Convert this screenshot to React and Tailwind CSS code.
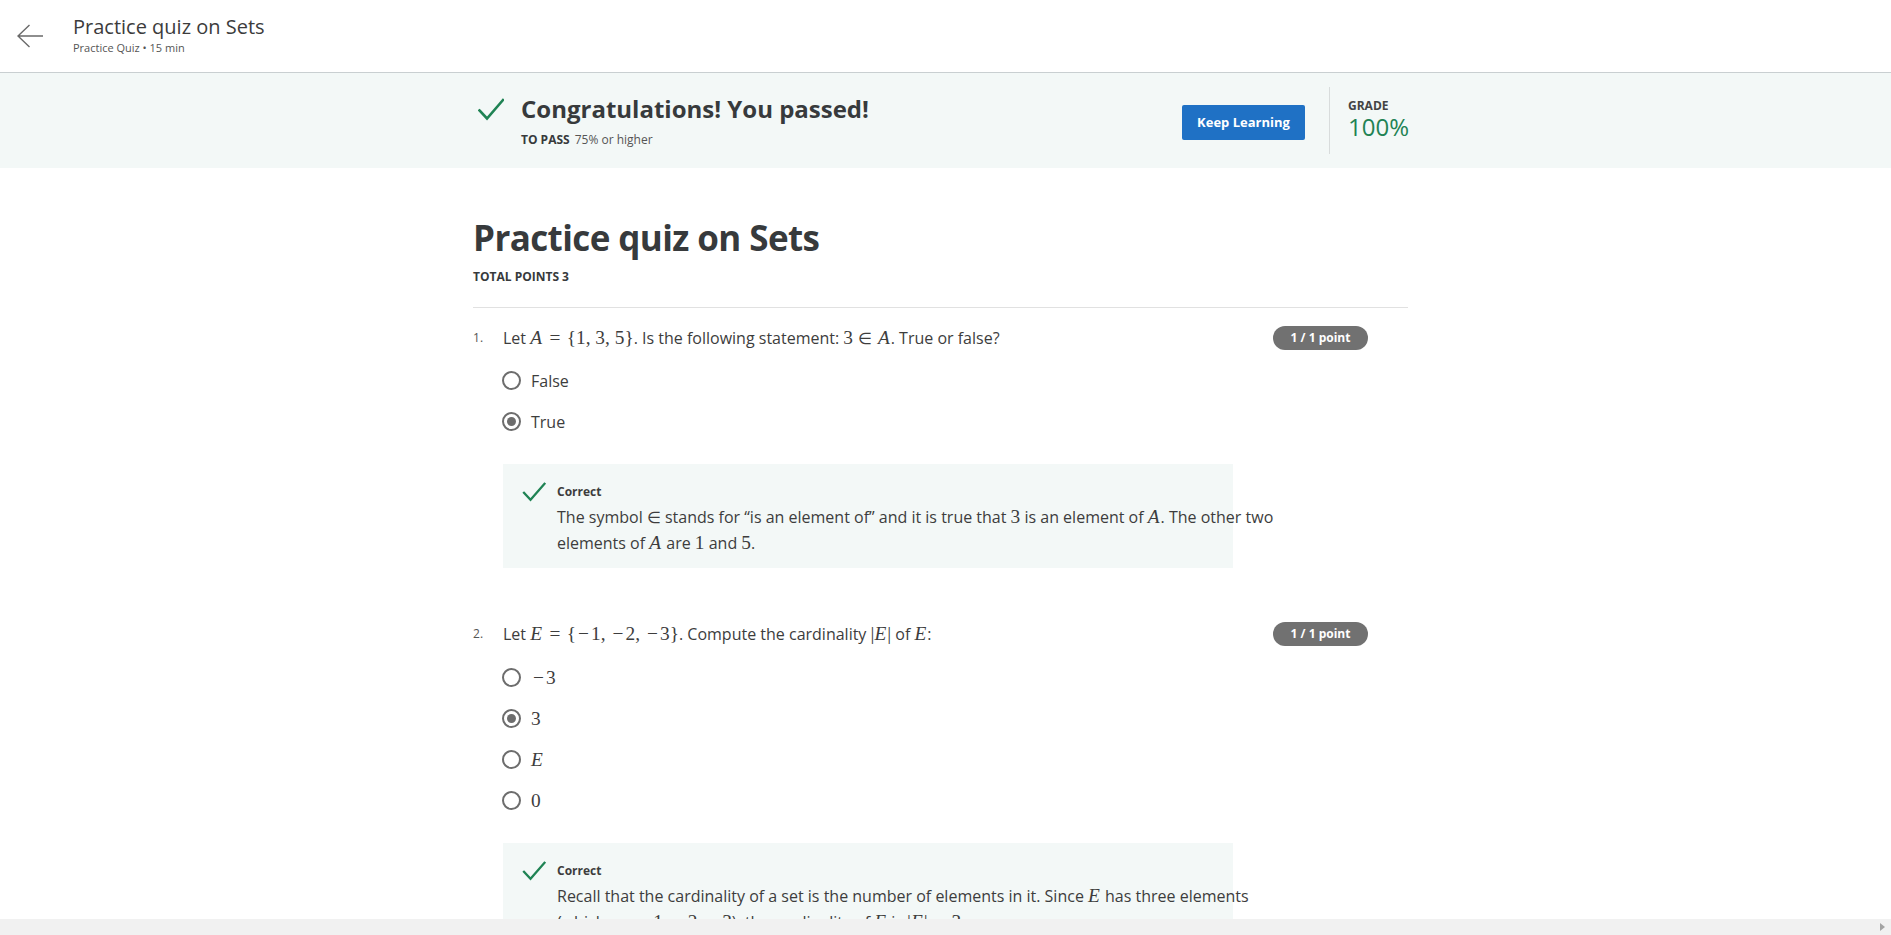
import React from "react";

const M = ({ children }) => (
  <span className="font-['Liberation_Serif',serif] text-[1.21em] leading-none">{children}</span>
);

const V = ({ children }) => <i className="pr-[1px]">{children}</i>;

// relation operator with KaTeX-like thick spacing
const R = ({ children, small }) => (
  <span className={small ? "mx-[0.33em] text-[0.85em]" : "mx-[0.33em]"}>{children}</span>
);

// wide minus like Computer Modern
const Minus = () => <span className="inline-block w-[0.78em] text-center">−</span>;

const Check = ({ className }) => (
  <svg viewBox="0 0 26 23" className={className} fill="none">
    <path d="M1.5 12.5 L9 20.5 L25 2" stroke="#1f8354" strokeWidth="2.6" strokeLinecap="square" />
  </svg>
);

const Radio = ({ checked }) => (
  <span className="flex h-[19px] w-[19px] items-center justify-center rounded-full border-2 border-[#6d6d6d]">
    {checked && <span className="h-[9px] w-[9px] rounded-full bg-[#6d6d6d]" />}
  </span>
);

const Option = ({ checked, children }) => (
  <div className="flex h-[41px] items-center pl-[29px]">
    <Radio checked={checked} />
    <span className="ml-[10px] text-[16px] text-[#3d3d3d]">{children}</span>
  </div>
);

const Badge = () => (
  <span className="mr-[40px] flex h-[24px] w-[95px] items-center justify-center rounded-full bg-[#717171] text-[12px] font-bold text-white">
    1 / 1 point
  </span>
);

const Feedback = ({ lines }) => (
  <div className="ml-[30px] flex h-[104px] w-[730px] shrink-0 bg-[#f3f8f7] pl-[19px]">
    <Check className="mt-[18px] h-[20px] w-[24px] shrink-0" />
    <div className="ml-[11px] pt-[20px]">
      <div className="text-[12px] leading-[16px] font-bold text-[#3d3d3d]">Correct</div>
      <div className="mt-[4px] whitespace-nowrap text-[16px] leading-[26px] text-[#3d3d3d]">
        {lines.map((l, i) => (
          <div key={i}>{l}</div>
        ))}
      </div>
    </div>
  </div>
);

const Question = ({ n, children }) => (
  <div className="flex h-[24px] items-center">
    <span className="w-[30px] text-[12px] text-[#555]">{n}.</span>
    <span className="flex-1 whitespace-nowrap text-[16px] text-[#3d3d3d]">{children}</span>
    <Badge />
  </div>
);

export default function App() {
  return (
    <div className="flex h-screen flex-col overflow-hidden bg-white font-['Open_Sans',sans-serif] text-[#373a3c]">
      {/* Header */}
      <header className="flex h-[73px] shrink-0 items-center border-b border-[#c9cfd1] bg-white">
        <svg viewBox="0 0 26 24" className="ml-[17px] h-[24px] w-[26px]" fill="none">
          <path d="M1 12 H26 M12.5 1 L1 12 L12.5 23" stroke="#6a6a6a" strokeWidth="1.4" />
        </svg>
        <div className="ml-[30px] -mt-[3px]">
          <div className="text-[20px] leading-[26px] text-[#3c3c3c]">Practice quiz on Sets</div>
          <div className="text-[11px] leading-[15px] text-[#555]">Practice Quiz • 15 min</div>
        </div>
      </header>

      <main className="flex-1 overflow-hidden">
        {/* Banner */}
        <div className="h-[95px] bg-[#f3f8f7]">
          <div className="ml-[473px] flex h-full w-[935px] items-center">
            <div className="flex pl-[5px]">
              <Check className="mt-[5px] h-[23px] w-[26px] shrink-0" />
              <div className="ml-[17px]">
                <div className="text-[24px] leading-[32px] font-bold text-[#373a3c]">
                  Congratulations! You passed!
                </div>
                <div className="mt-[7px] text-[12px] leading-[16px] text-[#555]">
                  <span className="font-bold text-[#373a3c]">TO PASS</span>
                  <span className="ml-[5px]">75% or higher</span>
                </div>
              </div>
            </div>
            <div className="ml-auto flex items-center">
              <button className="mt-[4px] h-[35px] w-[123px] rounded-[2px] bg-[#1f71c5] text-[13px] font-bold text-white">
                Keep Learning
              </button>
              <div className="ml-[24px] h-[67px] w-px bg-[#d8dcdc]" />
              <div className="ml-[18px] w-[60px]">
                <div className="text-[12px] leading-[12px] font-bold text-[#444]">GRADE</div>
                <div className="text-[24px] leading-[30px] text-[#1f8354]">100%</div>
              </div>
            </div>
          </div>
        </div>

        {/* Content */}
        <div className="ml-[473px] w-[935px] pt-[47px]">
          <h1 className="text-[35px] leading-[45px] font-bold tracking-[-0.6px] text-[#373a3c]">
            Practice quiz on Sets
          </h1>
          <div className="mt-[9px] text-[12px] leading-[16px] font-bold text-[#373a3c]">TOTAL POINTS 3</div>
          <div className="mt-[22px] border-t border-[#e1e1e1]" />

          <div className="mt-[18px]">
            <Question n={1}>
              Let <M><V>A</V><R>=</R>{"{"}1, 3, 5{"}"}</M>. Is the following statement:{" "}
              <M>3<R small>∈</R><V>A</V></M>. True or false?
            </Question>
            <div className="mt-[10px]">
              <Option>False</Option>
              <Option checked>True</Option>
            </div>
            <div className="mt-[22px]">
              <Feedback
                lines={[
                  <>
                    The symbol <M><span className="text-[0.85em]">∈</span></M> stands for “is an element of” and it is true that <M>3</M> is an element of{" "}
                    <M><V>A</V></M>. The other two
                  </>,
                  <>
                    elements of <M><V>A</V></M> are <M>1</M> and <M>5</M>.
                  </>,
                ]}
              />
            </div>
          </div>

          <div className="mt-[54px]">
            <Question n={2}>
              Let <M><V>E</V><R>=</R>{"{"}<Minus />1, <Minus />2, <Minus />3{"}"}</M>. Compute the cardinality{" "}
              <M>|<V>E</V>|</M> of <M><V>E</V></M>:
            </Question>
            <div className="mt-[11px]">
              <Option><M><Minus />3</M></Option>
              <Option checked><M>3</M></Option>
              <Option><M><V>E</V></M></Option>
              <Option><M>0</M></Option>
            </div>
            <div className="mt-[22px]">
              <Feedback
                lines={[
                  <>
                    Recall that the cardinality of a set is the number of elements in it. Since <M><V>E</V></M> has three elements
                  </>,
                  <>
                    (which are <M><Minus />1, <Minus />2, <Minus />3</M>), the cardinality of <M><V>E</V></M> is{" "}
                    <M>|<V>E</V>|<R>=</R>3</M>.
                  </>,
                ]}
              />
            </div>
          </div>
        </div>
      </main>

      {/* horizontal scrollbar */}
      <div className="flex h-[16px] shrink-0 items-center justify-end bg-[#f1f1f1] pr-[6px]">
        <span className="h-0 w-0 border-y-[4px] border-l-[5px] border-y-transparent border-l-[#a3a3a3]" />
      </div>
    </div>
  );
}
